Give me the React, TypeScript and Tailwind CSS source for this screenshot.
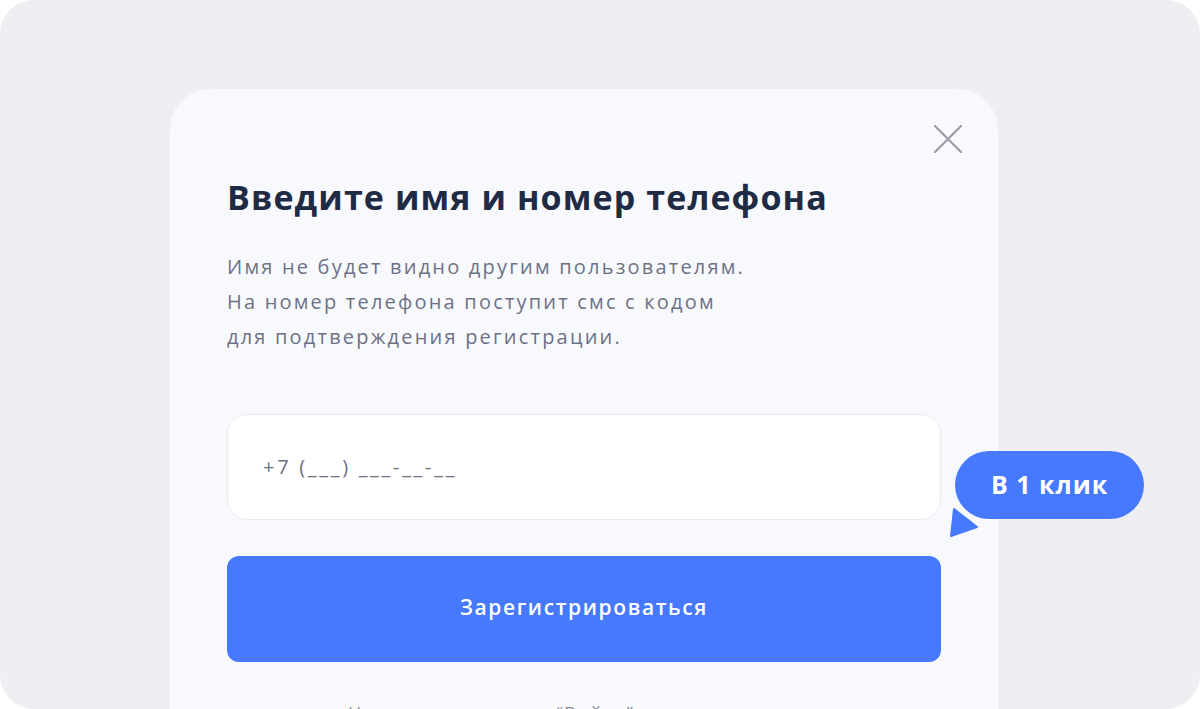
import React from "react";

export default function App() {
  return (
    <div className="w-[1200px] h-[709px] bg-white" style={{ fontFamily: "'Open Sans', 'Noto Sans', sans-serif" }}>
      <div className="w-full h-full rounded-[34px] bg-[#efeef3] overflow-hidden pt-[89px] pl-[170px]">
        <div className="relative w-[828px] h-[700px] rounded-[40px] bg-[#f8f9fd] px-[57px] pt-[86px]">
          <button className="absolute right-[36px] top-[36px] w-[28px] h-[28px] flex items-center justify-center">
            <svg width="28" height="28" viewBox="0 0 28 28" fill="none">
              <path d="M1 1L27 27M27 1L1 27" stroke="#9a9ca8" strokeWidth="2.2" strokeLinecap="round" />
            </svg>
          </button>
          <h1 className="text-[34px] leading-[44px] font-bold text-[#1f2a44] tracking-[1.1px] whitespace-nowrap">
            Введите имя и номер телефона
          </h1>
          <p className="mt-[30px] text-[20px] leading-[35px] text-[#6d7185] tracking-[2.2px] whitespace-nowrap">
            Имя не будет видно другим пользователям.
            <br />
            На номер телефона поступит смс с кодом
            <br />
            для подтверждения регистрации.
          </p>
          <div className="mt-[60px] h-[106px] rounded-[20px] bg-white border border-[#ebebf0] flex items-center pl-[35px]">
            <span className="text-[20px] text-[#6d7185] tracking-[2.7px]">+7 (___) ___-__-__</span>
          </div>
          <button className="mt-[36px] w-full h-[106px] rounded-[12px] bg-[#4679fe] text-white text-[21px] font-semibold tracking-[1.6px] flex items-center justify-center pb-[3px]">
            Зарегистрироваться
          </button>
          <p className="mt-[39px] pl-[121px] text-[18px] leading-[24px] text-[#8a8ea0] tracking-[1.7px] whitespace-nowrap">
            Нажимая на кнопку “Войти”, вы соглашаетесь
          </p>
          <div className="absolute left-[785px] top-[362px]">
            <div className="h-[68px] px-[36px] rounded-full bg-[#4679fe] flex items-center">
              <span className="text-[25px] font-bold text-white whitespace-nowrap tracking-[1px]">В 1 клик</span>
            </div>
            <svg className="absolute left-[-6px] top-[55px]" width="34" height="34" viewBox="0 0 34 34">
              <path d="M5 3 L2 30 L28 21 Z" fill="#4679fe" strokeLinejoin="round" stroke="#4679fe" strokeWidth="2" />
            </svg>
          </div>
        </div>
      </div>
    </div>
  );
}
